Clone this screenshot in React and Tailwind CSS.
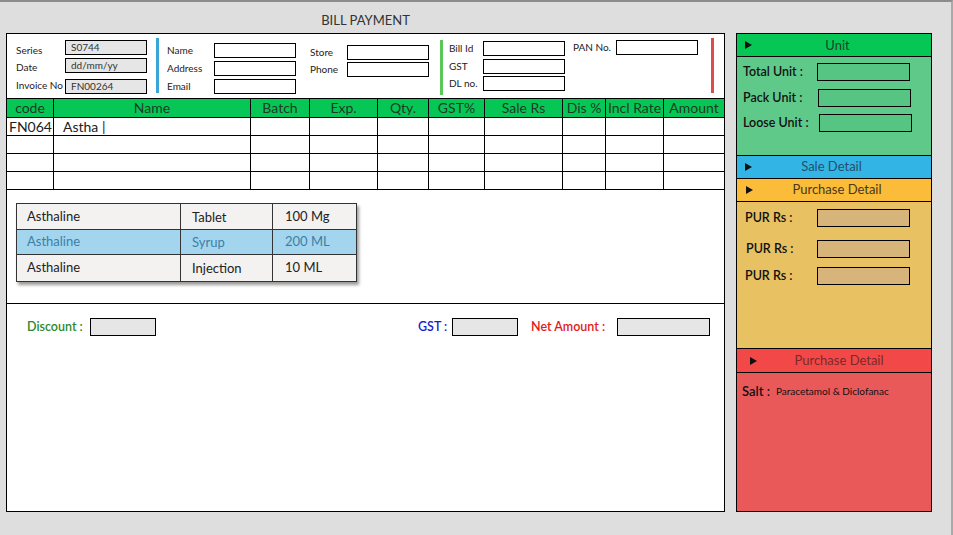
import React from "react";

function Tri({ className = "" }) {
  return (
    <svg width="7" height="8" viewBox="0 0 7 8" className={className}>
      <polygon points="0,0 7,4 0,8" fill="#111" />
    </svg>
  );
}

function Box({ w = "w-[82px]", bg = "bg-white", children }) {
  return (
    <div className={`${w} h-[15px] border border-black ${bg} text-[10px] leading-[13px] text-[#333] pl-[5px]`}>
      {children}
    </div>
  );
}

const drugs = [
  { name: "Asthaline", form: "Tablet", qty: "100 Mg" },
  { name: "Asthaline", form: "Syrup", qty: "200 ML", active: true },
  { name: "Asthaline", form: "Injection", qty: "10 ML" },
];

const heads = ["code", "Name", "Batch", "Exp.", "Qty.", "GST%", "Sale Rs", "Dis %", "Incl Rate", "Amount"];
const grid = "grid grid-cols-[47px_197px_59px_68px_51px_56px_78px_43px_58px_1fr]";
const lbl = "text-[10px] leading-[15px] h-[15px] whitespace-nowrap";

export default function App() {
  return (
    <div className="w-[953px] h-[535px] bg-[#dedede] border-t-2 border-t-[#8c8c8c] border-r-2 border-r-[#a9a9a9] font-['Lato',sans-serif] text-[#222]">
      <div className="w-[719px] ml-[6px] h-[31px] pt-[12px] text-center text-[13px] leading-none text-[#333]">BILL PAYMENT</div>

      <div className="flex pl-[6px] gap-[11px]">
        {/* main panel */}
        <div className="w-[719px] h-[479px] border border-black bg-white flex flex-col">
          <div className="h-[64px] flex items-start">
            <div className="ml-[9px] flex flex-col">
              <div className="flex items-center mt-[6px]"><span className={`w-[49px] ${lbl} translate-y-[3px]`}>Series</span><Box bg="bg-[#e6e6e6]">S0744</Box></div>
              <div className="flex items-center mt-[3px]"><span className={`w-[49px] ${lbl} translate-y-[2px]`}>Date</span><Box bg="bg-[#e6e6e6]">dd/mm/yy</Box></div>
              <div className="flex items-center mt-[6px]"><span className={`w-[49px] ${lbl} -translate-y-[1px]`}>Invoice No</span><Box bg="bg-[#e6e6e6]">FN00264</Box></div>
            </div>
            <div className="ml-[9px] mt-[4px] w-[3px] h-[55px] bg-[#3aa6d8]" />
            <div className="ml-[8px] flex flex-col">
              <div className="flex items-center mt-[9px]"><span className={`w-[47px] ${lbl}`}>Name</span><Box /></div>
              <div className="flex items-center mt-[3px]"><span className={`w-[47px] ${lbl}`}>Address</span><Box /></div>
              <div className="flex items-center mt-[3px]"><span className={`w-[47px] ${lbl}`}>Email</span><Box /></div>
            </div>
            <div className="ml-[14px] flex flex-col">
              <div className="flex items-center mt-[11px]"><span className={`w-[37px] ${lbl}`}>Store</span><Box /></div>
              <div className="flex items-center mt-[2px]"><span className={`w-[37px] ${lbl}`}>Phone</span><Box /></div>
            </div>
            <div className="ml-[11px] mt-[6px] w-[3px] h-[55px] bg-[#5cc85a]" />
            <div className="ml-[6px] flex flex-col">
              <div className="flex items-center mt-[7px]"><span className={`w-[34px] ${lbl}`}>Bill Id</span><Box /></div>
              <div className="flex items-center mt-[3px]"><span className={`w-[34px] ${lbl}`}>GST</span><Box /></div>
              <div className="flex items-center mt-[2px]"><span className={`w-[34px] ${lbl}`}>DL no.</span><Box /></div>
            </div>
            <div className="ml-[8px] flex items-center mt-[6px]"><span className={`w-[43px] ${lbl}`}>PAN No.</span><Box /></div>
            <div className="ml-[13px] mt-[4px] w-[3px] h-[55px] bg-[#e04a4a]" />
          </div>

          {/* table box */}
          <div className="border-t border-b border-black h-[206px] flex flex-col">
            <div className={`${grid} h-[19px] bg-[#06c755] border-b border-black`}>
              {heads.map((h, i) => (
                <div key={h} className={`text-center text-[14px] leading-[18px] text-[#1f3a25] ${i < 9 ? "border-r border-black" : ""}`}>{h}</div>
              ))}
            </div>
            {[0, 1, 2, 3].map((r) => (
              <div key={r} className={`${grid} h-[18px] border-b border-black`}>
                {heads.map((h, i) => (
                  <div key={h} className={`text-[14px] leading-[17px] text-[#222] ${i < 9 ? "border-r border-black" : ""} ${i === 0 ? "pl-[2px]" : ""} ${i === 1 ? "pl-[9px]" : ""}`}>
                    {r === 0 && i === 0 ? "FN064" : r === 0 && i === 1 ? "Astha |" : ""}
                  </div>
                ))}
              </div>
            ))}
            <div className="pt-[13px] pl-[9px]">
              <div className="w-[341px] border border-[#333] bg-[#f4f1f1] shadow-[2px_3px_3px_rgba(0,0,0,0.4)]">
                {drugs.map((d, i) => (
                  <div
                    key={i}
                    className={`grid grid-cols-[164px_92px_1fr] text-[13px] ${i === 0 ? "h-[26px]" : i === 1 ? "h-[25px]" : "h-[26px]"} ${i < 2 ? "border-b border-[#333]" : ""} ${d.active ? "bg-[#a3d5ee] text-[#3b7fa6]" : "text-[#222]"}`}
                  >
                    <div className="pl-[10px] flex items-center border-r border-[#333]">{d.name}</div>
                    <div className={`pl-[11px] flex ${i === 0 ? "items-start pt-[4px]" : "items-center pt-[2px]"} border-r border-[#333]`}>{d.form}</div>
                    <div className="pl-[12px] flex items-center">{d.qty}</div>
                  </div>
                ))}
              </div>
            </div>
          </div>

          {/* totals */}
          <div className="flex items-center mt-[14px] ml-[20px]">
            <span className="w-[63px] text-[12.5px] font-semibold text-[#2d8a2d]">Discount :</span>
            <div className="w-[66px] h-[18px] border border-black bg-[#e6e6e6]" />
            <span className="ml-[262px] w-[34px] text-[12.5px] font-semibold text-[#1c1ccc]">GST :</span>
            <div className="w-[66px] h-[18px] border border-black bg-[#e6e6e6]" />
            <span className="ml-[13px] w-[86px] text-[12.5px] font-semibold text-[#e3191c]">Net Amount :</span>
            <div className="w-[93px] h-[18px] border border-black bg-[#e6e6e6]" />
          </div>
        </div>

        {/* right panel */}
        <div className="w-[196px] h-[479px] border border-black flex flex-col">
          <div className="h-[23px] bg-[#06c755] border-b border-black flex items-center pl-[8px]">
            <Tri />
            <span className="flex-1 text-center pr-[8px] pt-[2px] text-[13px] text-[#23402b]">Unit</span>
          </div>
          <div className="h-[98px] bg-[#5fc98a]">
            <div className="flex items-center mt-[6px] pl-[6px]"><span className="w-[74px] text-[12.5px] font-semibold text-[#111]">Total Unit :</span><div className="w-[93px] h-[18px] border border-black bg-[#56c483]" /></div>
            <div className="flex items-center mt-[7px] pl-[6px]"><span className="w-[75px] text-[12.5px] font-semibold text-[#111]">Pack Unit :</span><div className="w-[93px] h-[18px] border border-black bg-[#56c483]" /></div>
            <div className="flex items-center mt-[6px] pl-[6px]"><span className="w-[76px] text-[12.5px] font-semibold text-[#111]">Loose Unit :</span><div className="w-[93px] h-[18px] border border-black bg-[#56c483]" /></div>
          </div>
          <div className="h-[24px] bg-[#32b4e4] border-t border-b border-black flex items-center pl-[8px]">
            <Tri />
            <span className="flex-1 text-center pr-[20px] text-[13px] text-[#24506f]">Sale Detail</span>
          </div>
          <div className="h-[23px] bg-[#fbbc3a] border-b border-black flex items-center pl-[9px]">
            <Tri />
            <span className="flex-1 text-center pr-[10px] text-[13px] text-[#4a3818]">Purchase Detail</span>
          </div>
          <div className="h-[146px] bg-[#e8c163]">
            <div className="flex items-center mt-[7px] pl-[8px]"><span className="w-[72px] text-[12.5px] font-semibold text-[#111]">PUR Rs :</span><div className="w-[93px] h-[18px] border border-black bg-[#d6b47a]" /></div>
            <div className="flex items-center mt-[12px] pl-[9px]"><span className="w-[71px] text-[12.5px] font-semibold text-[#111]">PUR Rs :</span><div className="w-[93px] h-[18px] border border-black bg-[#d6b47a]" /></div>
            <div className="flex items-center mt-[8px] pl-[8px]"><span className="w-[72px] text-[12.5px] font-semibold text-[#111]">PUR Rs :</span><div className="w-[93px] h-[18px] border border-black bg-[#d6b47a]" /></div>
          </div>
          <div className="h-[25px] bg-[#f34848] border-t border-b border-black flex items-center pl-[13px]">
            <Tri />
            <span className="flex-1 text-center pr-[10px] text-[13px] text-[#7a2a2a]">Purchase Detail</span>
          </div>
          <div className="flex-1 bg-[#ea5959] pl-[5px] pt-[9px]">
            <div className="flex items-center">
              <span className="text-[13px] font-semibold text-[#111]">Salt :</span>
              <span className="ml-[6px] text-[10px] text-[#111]">Paracetamol &amp; Diclofanac</span>
            </div>
          </div>
        </div>
      </div>
    </div>
  );
}
